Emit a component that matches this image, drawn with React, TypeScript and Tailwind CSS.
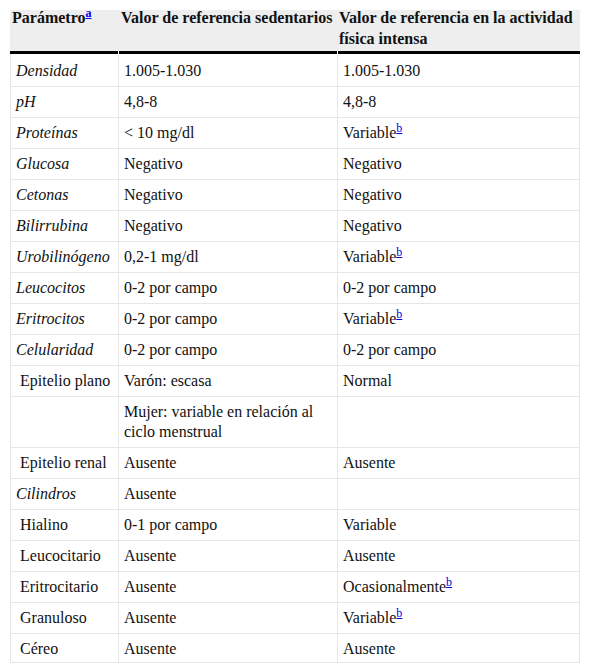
import React from "react";

type Row = {
  p: string;
  italic?: boolean;
  indent?: boolean;
  s: string;
  a: string;
  sup?: boolean;
};

const rows: Row[] = [
  { p: "Densidad", italic: true, s: "1.005-1.030", a: "1.005-1.030" },
  { p: "pH", italic: true, s: "4,8-8", a: "4,8-8" },
  { p: "Proteínas", italic: true, s: "< 10 mg/dl", a: "Variable", sup: true },
  { p: "Glucosa", italic: true, s: "Negativo", a: "Negativo" },
  { p: "Cetonas", italic: true, s: "Negativo", a: "Negativo" },
  { p: "Bilirrubina", italic: true, s: "Negativo", a: "Negativo" },
  { p: "Urobilinógeno", italic: true, s: "0,2-1 mg/dl", a: "Variable", sup: true },
  { p: "Leucocitos", italic: true, s: "0-2 por campo", a: "0-2 por campo" },
  { p: "Eritrocitos", italic: true, s: "0-2 por campo", a: "Variable", sup: true },
  { p: "Celularidad", italic: true, s: "0-2 por campo", a: "0-2 por campo" },
  { p: "Epitelio plano", indent: true, s: "Varón: escasa", a: "Normal" },
  { p: "", s: "Mujer: variable en relación al ciclo menstrual", a: "" },
  { p: "Epitelio renal", indent: true, s: "Ausente", a: "Ausente" },
  { p: "Cilindros", italic: true, s: "Ausente", a: "" },
  { p: "Hialino", indent: true, s: "0-1 por campo", a: "Variable" },
  { p: "Leucocitario", indent: true, s: "Ausente", a: "Ausente" },
  { p: "Eritrocitario", indent: true, s: "Ausente", a: "Ocasionalmente", sup: true },
  { p: "Granuloso", indent: true, s: "Ausente", a: "Variable", sup: true },
  { p: "Céreo", indent: true, s: "Ausente", a: "Ausente" },
];

function Sup({ t }: { t: string }) {
  return <sup className="text-[#0000ee] underline text-[12px] -top-[6px]">{t}</sup>;
}

export default function App() {
  const base = "border-b border-l border-[#e6e6e6] pl-[5px] pr-[4px] pb-[5px] align-top";
  return (
    <div className="bg-white w-[590px] h-[665px] overflow-hidden pt-[7px] px-[10px] text-[16px] leading-[20px] text-[#111] font-['Liberation_Serif','Times_New_Roman',serif]">
      <div className="w-[570px] h-[656px] overflow-hidden border-b border-[#e6e6e6]">
        <table className="mt-[3px] w-[570px] border-separate border-spacing-0 table-fixed">
          <colgroup>
            <col className="w-[108px]" />
            <col className="w-[219px]" />
            <col className="w-[243px]" />
          </colgroup>
          <thead>
            <tr className="bg-[#eeeeee]">
              <th className="h-[44px] text-left font-bold align-top pl-[2px] pr-0 py-0 border-b-[3px] border-black">
                <div className="-mt-[3px] leading-[21px]">
                  Parámetro
                  <Sup t="a" />
                </div>
              </th>
              <th className="relative h-[44px] text-left font-bold align-top pl-[3px] pr-0 py-0 border-b-[3px] border-black">
                <span className="absolute left-0 bottom-[-3px] w-px h-[3px] bg-white" />
                <div className="-mt-[3px] leading-[21px]">Valor de referencia sedentarios</div>
              </th>
              <th className="relative h-[44px] text-left font-bold align-top pl-[2px] pr-0 py-0 border-b-[3px] border-black">
                <span className="absolute left-0 bottom-[-3px] w-px h-[3px] bg-white" />
                <div className="-mt-[3px] leading-[21px]">
                  Valor de referencia en la actividad física intensa
                </div>
              </th>
            </tr>
          </thead>
          <tbody>
            {rows.map((r, i) => {
              const cell = `${base} ${i === 0 ? "pt-[7px]" : "pt-[5px]"}`;
              return (
                <tr key={i}>
                  <td className={`${cell} ${r.italic ? "italic" : ""}`}>
                    {r.indent ? "\u00a0" : ""}
                    {r.p}
                  </td>
                  <td className={cell}>{r.s}</td>
                  <td className={`${cell} border-r`}>
                    {r.a}
                    {r.sup ? <Sup t="b" /> : null}
                  </td>
                </tr>
              );
            })}
          </tbody>
        </table>
      </div>
    </div>
  );
}
